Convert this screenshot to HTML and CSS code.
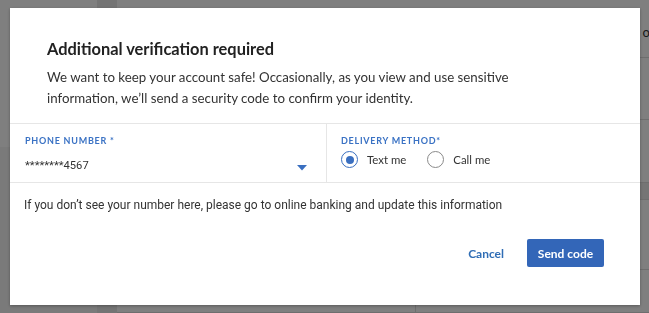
FILE: index.html
```html
<!DOCTYPE html>
<html lang="en">
<head>
    <meta charset="UTF-8">
    <meta name="viewport" content="width=device-width, initial-scale=1.0">
    <title>Additional verification required</title>
    <link rel="stylesheet" href="styles.css">
</head>
<body>
    <!-- page behind the dialog -->
    <div class="page">
        <div class="sidebar">
            <div class="sidebar-top">
                <span class="side-item side-first">Eas</span>
                <span class="side-item">U</span>
            </div>
        </div>
        <div class="content">
            <div class="content-row row-head"><span class="row-end">o.</span></div>
            <div class="content-row row-a"></div>
            <div class="content-row row-b"></div>
            <div class="content-row row-band"></div>
            <div class="content-row row-c"></div>
            <div class="content-row row-last">
                <span class="cell cell-name">East movers</span>
                <span class="cell cell-mail">ap@eastmovers.com</span>
            </div>
        </div>
    </div>

    <div class="overlay">
        <div class="modal">
            <div class="modal-header">
                <h2>Additional verification required</h2>
                <p>We want to keep your account safe! Occasionally, as you view and use sensitive information, we’ll send a security code to confirm your identity.</p>
            </div>

            <div class="field-row">
                <div class="field field-phone">
                    <label class="field-label">Phone number *</label>
                    <div class="select">
                        <span class="select-value">********4567</span>
                        <svg class="caret" width="10" height="6" viewBox="0 0 10 6"><path d="M0 0h10L5 5.5z" fill="#3a6fc0"/></svg>
                    </div>
                </div>
                <div class="field field-method">
                    <label class="field-label">Delivery method*</label>
                    <div class="radios">
                        <label class="radio checked"><span class="radio-circle"></span>Text me</label>
                        <label class="radio"><span class="radio-circle"></span>Call me</label>
                    </div>
                </div>
            </div>

            <p class="help">If you don’t see your number here, please go to online banking and update this information</p>

            <div class="modal-footer">
                <button class="btn-link">Cancel</button>
                <button class="btn-primary">Send code</button>
            </div>
        </div>
    </div>
</body>
</html>
```

FILE: styles.css
```css
* {
    margin: 0;
    padding: 0;
    box-sizing: border-box;
}

body {
    font-family: 'Lato', 'Noto Sans', sans-serif;
    color: #333;
    background-color: #fff;
    width: 649px;
    height: 313px;
    overflow: hidden;
}

/* page behind */
.page {
    display: flex;
    height: 313px;
}

.sidebar {
    width: 117px;
    background-color: #f4f4f4;
    border-right: 20px solid #e9e9e9;
}

.sidebar-top {
    height: 147px;
    background-color: #fff;
    display: flex;
    flex-direction: column;
    padding-top: 40px;
    gap: 34px;
    font-size: 13px;
    color: #333;
}

.side-item {
    margin-left: -18px;
}

.side-first {
    margin-left: -22px;
}

.content {
    flex: 1;
    display: flex;
    flex-direction: column;
}

.content-row {
    border-bottom: 1px solid #ddd;
}

.row-head {
    height: 58px;
    display: flex;
    justify-content: flex-end;
    align-items: center;
    padding-top: 6px;
    font-size: 13px;
}

.row-end {
    margin-right: -4px;
}

.row-a {
    height: 62px;
}

.row-b {
    height: 63px;
}

.row-band {
    height: 17px;
    background-color: #eaeaea;
}

.row-c {
    height: 70px;
}

.row-last {
    flex: 1;
    display: flex;
    font-size: 14px;
    padding-top: 2px;
}

.cell-name {
    width: 299px;
    padding-left: 15px;
    border-right: 1px solid #ddd;
}

.cell-mail {
    padding-left: 13px;
}

/* dialog */
.overlay {
    position: fixed;
    inset: 0;
    background-color: rgba(0, 0, 0, 0.5);
    display: flex;
    padding: 8px 9px 8px 10px;
}

.modal {
    flex: 1;
    background-color: #fff;
    display: flex;
    flex-direction: column;
    box-shadow: 0 1px 3px rgba(0, 0, 0, 0.3);
}

.modal-header {
    padding: 30px 37px 14px 37px;
}

.modal-header h2 {
    font-size: 16.4px;
    line-height: 22px;
    font-weight: 700;
    color: #222;
    margin-bottom: 7px;
}

.modal-header p {
    max-width: 475px;
    font-size: 13.3px;
    line-height: 21px;
    color: #333;
}

.field-row {
    display: flex;
    height: 60px;
    border-top: 1px solid #e6e6e6;
    border-bottom: 1px solid #e6e6e6;
}

.field {
    display: flex;
    flex-direction: column;
    padding-top: 11px;
}

.field-phone {
    width: 317px;
    padding-left: 15px;
    padding-right: 19px;
    border-right: 1px solid #e6e6e6;
}

.field-method {
    flex: 1;
    padding-left: 14px;
}

.field-label {
    font-family: 'Lato', sans-serif;
    font-size: 9px;
    line-height: 12px;
    font-weight: 700;
    letter-spacing: 0.75px;
    text-transform: uppercase;
    color: #3a72c4;
}

.select {
    display: flex;
    align-items: center;
    justify-content: space-between;
    margin-top: 10px;
    height: 16px;
}

.select-value {
    font-family: 'Roboto', sans-serif;
    font-size: 11.2px;
    color: #333;
}

.caret {
    margin-top: 6px;
}

.radios {
    display: flex;
    gap: 21px;
    margin-top: 4px;
}

.radio {
    display: flex;
    align-items: center;
    gap: 9px;
    font-size: 11.4px;
    color: #333;
}

.radio-circle {
    width: 17px;
    height: 17px;
    border-radius: 50%;
    border: 1px solid #8a8a8a;
    display: flex;
    align-items: center;
    justify-content: center;
}

.radio.checked .radio-circle {
    border: 1.5px solid #3a6fc0;
}

.radio.checked .radio-circle::after {
    content: '';
    width: 8px;
    height: 8px;
    border-radius: 50%;
    background-color: #3a6fc0;
}

.help {
    font-family: 'Roboto', sans-serif;
    font-size: 12px;
    line-height: 14px;
    color: #333;
    padding: 15px 14px 0 14px;
}

.modal-footer {
    display: flex;
    justify-content: flex-end;
    align-items: center;
    gap: 23px;
    padding: 0 36px 0 0;
    margin-top: 27px;
}

.btn-link {
    background: none;
    border: none;
    font-family: 'Lato', sans-serif;
    font-size: 12px;
    font-weight: 700;
    color: #2f6db5;
    cursor: pointer;
}

.btn-primary {
    width: 77px;
    height: 28px;
    background-color: #3366b8;
    color: #fff;
    border: none;
    border-radius: 2px;
    font-family: 'Lato', sans-serif;
    font-size: 12px;
    font-weight: 700;
    cursor: pointer;
}
```
